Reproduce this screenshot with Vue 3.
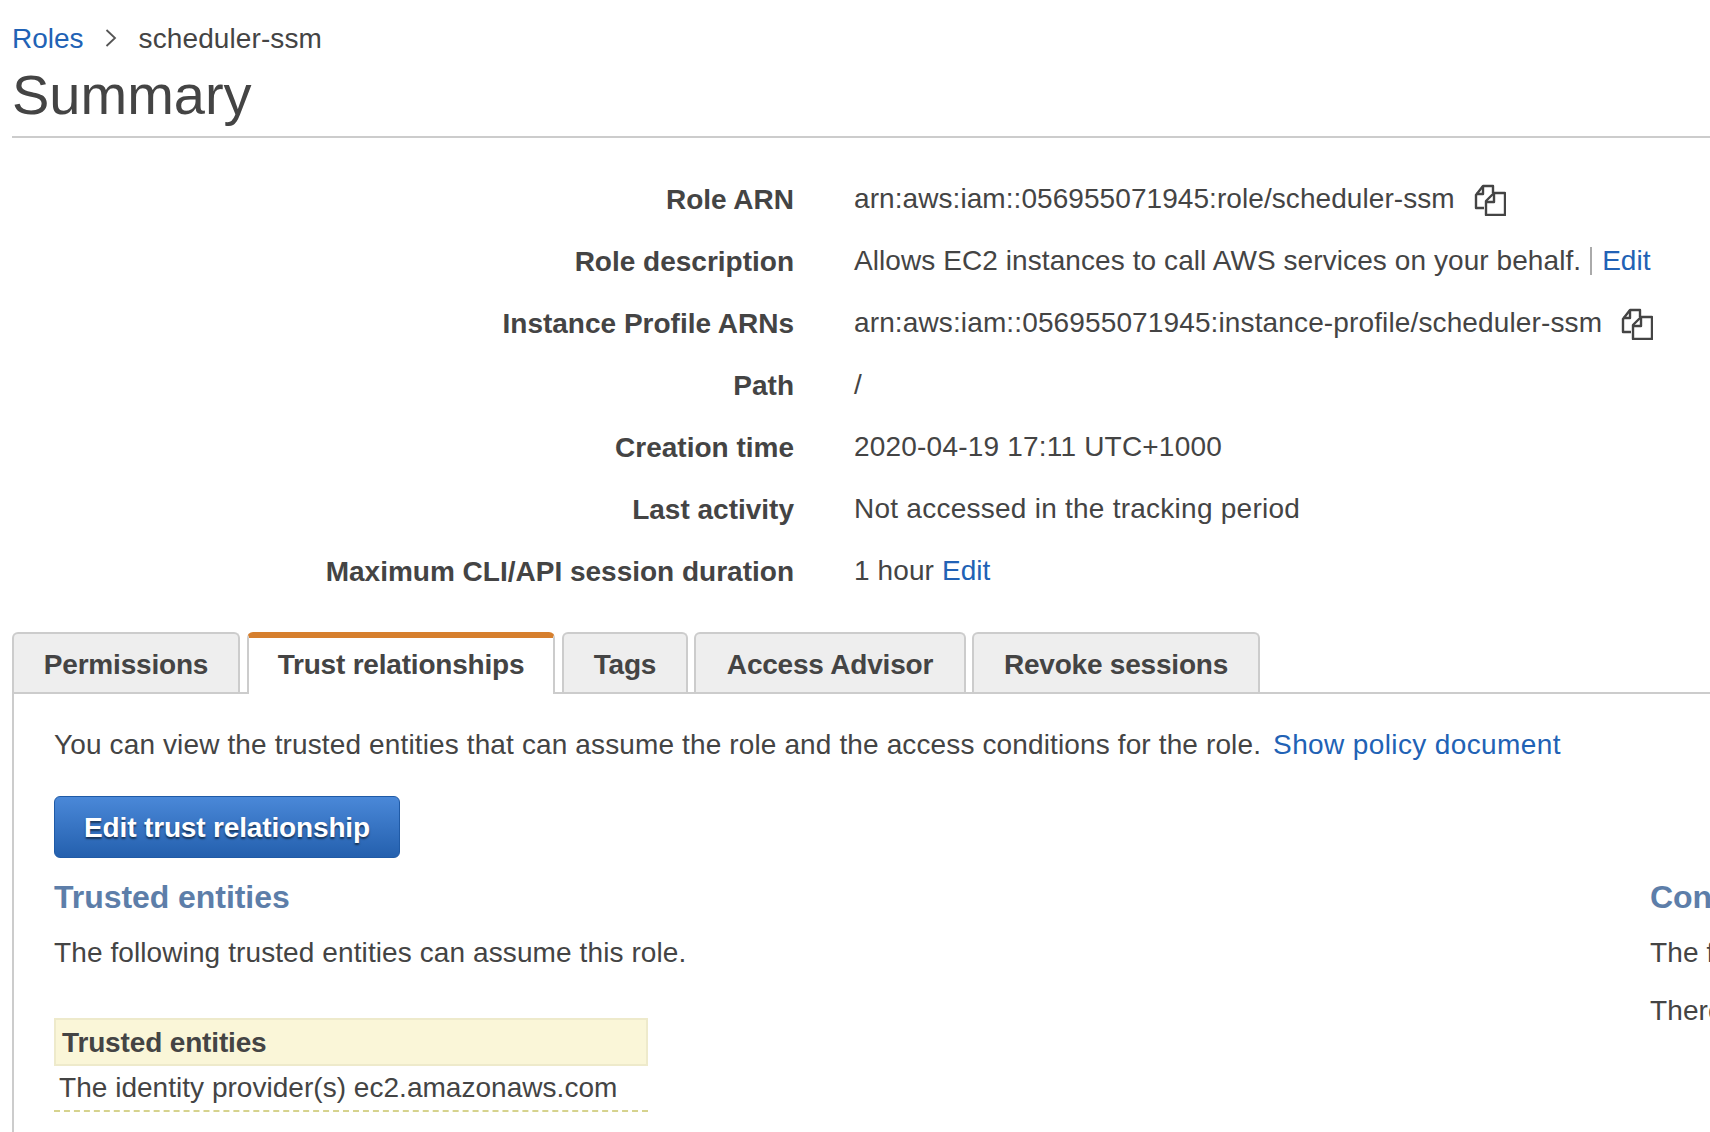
<script setup>
const rows = [
  { label: 'Role ARN', value: 'arn:aws:iam::056955071945:role/scheduler-ssm', copy: true, ls: 0.07 },
  { label: 'Role description', value: 'Allows EC2 instances to call AWS services on your behalf.', sep: true, edit: true, ls: 0.08 },
  { label: 'Instance Profile ARNs', value: 'arn:aws:iam::056955071945:instance-profile/scheduler-ssm', copy: true, ls: 0.13 },
  { label: 'Path', value: '/', ls: 0 },
  { label: 'Creation time', value: '2020-04-19 17:11 UTC+1000', ls: 0.2 },
  { label: 'Last activity', value: 'Not accessed in the tracking period', ls: 0.25 },
  { label: 'Maximum CLI/API session duration', value: '1 hour', edit: true, ls: 0.1 },
]
const tabs = ['Permissions', 'Trust relationships', 'Tags', 'Access Advisor', 'Revoke sessions']
</script>

<template>
  <div class="page">
    <nav class="crumbs">
      <a class="link">Roles</a>
      <svg class="chev" viewBox="0 0 12 18" width="12" height="18"><path d="M1.5 1l8.5 8-8.5 8" fill="none" stroke="#555" stroke-width="1.8" /></svg>
      <span class="current">scheduler-ssm</span>
    </nav>
    <h1>Summary</h1>

    <section class="details">
      <div v-for="r in rows" :key="r.label" class="row">
        <div class="label">{{ r.label }}</div>
        <div class="value">
          <span :style="{ letterSpacing: r.ls + 'px' }">{{ r.value }}</span>
          <span v-if="r.sep" class="sep"></span>
          <a v-if="r.edit" class="link" :class="{ spaced: !r.sep }">Edit</a>
          <svg v-if="r.copy" class="copy" viewBox="0 0 32 32" width="32" height="32" fill="none" stroke="#444" stroke-width="2.4" stroke-linejoin="round">
            <path d="M10 24H2V11L9 2h10v7" />
            <path d="M9 2v8H2" />
            <path d="M12 31V17l8-8h11v22z" />
            <path d="M20 9v9h-8" />
          </svg>
        </div>
      </div>
    </section>

    <div class="tabs">
      <div v-for="(t, i) in tabs" :key="t" class="tab" :class="['tab' + i, { active: i === 1 }]">{{ t }}</div>
    </div>

    <section class="panel">
      <p class="intro">You can view the trusted entities that can assume the role and the access conditions for the role.<a class="link show">Show policy document</a></p>
      <button class="btn">Edit trust relationship</button>
      <div class="cols">
        <div class="col-left">
          <h2>Trusted entities</h2>
          <p class="sub">The following trusted entities can assume this role.</p>
          <div class="tbl">
            <div class="th">Trusted entities</div>
            <div class="td">The identity provider(s) ec2.amazonaws.com</div>
          </div>
        </div>
        <div class="col-right">
          <h2>Conditions</h2>
          <p class="sub">The following conditions define how and when trusted entities can assume the role.</p>
          <p class="sub second">There are no conditions associated with this role.</p>
        </div>
      </div>
    </section>
  </div>
</template>

<style>
html, body { margin: 0; background: #fff; overflow: hidden; }
</style>

<style scoped>
.page {
  width: 1710px;
  height: 1132px;
  overflow: hidden;
  box-sizing: border-box;
  padding-left: 12px;
  font-family: "Liberation Sans", Arial, sans-serif;
  font-size: 28px;
  color: #444;
  background: #fff;
}
.link { color: #2162b5; }
.crumbs {
  display: flex;
  align-items: center;
  height: 32px;
  padding-top: 23px;
  line-height: 32px;
}
.chev { margin: -2px 22px 0 21px; }
.current { letter-spacing: 0.1px; }
h1 {
  margin: 8px 0 0;
  height: 73px;
  line-height: 64px;
  font-size: 56px;
  font-weight: 400;
  border-bottom: 2px solid #ccc;
}
.details { margin-top: 31px; }
.row {
  display: grid;
  grid-template-columns: 782px 1fr;
  column-gap: 60px;
  height: 62px;
  align-items: center;
}
.label { text-align: right; font-weight: 700; }
.value {
  display: flex;
  align-items: center;
  white-space: nowrap;
  margin-top: -3px;
}
.copy { margin-left: 19px; margin-top: 3px; flex: none; }
.sep {
  width: 2px;
  height: 28px;
  background: #aaa;
  margin: 0 10px 0 9px;
}
.spaced { margin-left: 8px; }
.tabs {
  display: flex;
  margin-top: 29px;
  height: 60px;
  align-items: flex-end;
  border-bottom: 2px solid #ccc;
}
.tab {
  box-sizing: border-box;
  height: 60px;
  padding-top: 3px;
  display: flex;
  align-items: center;
  justify-content: center;
  font-weight: 700;
  letter-spacing: -0.2px;
  background: #eee;
  border: 2px solid #ccc;
  border-bottom: 0;
  border-radius: 6px 6px 0 0;
  white-space: nowrap;
}
.tab0 { width: 228px; margin-right: 7px; }
.tab1 { width: 308px; margin-right: 7px; }
.tab2 { width: 126px; margin-right: 6px; }
.tab3 { width: 272px; margin-right: 6px; }
.tab4 { width: 288px; }
.tab.active {
  background: #fff;
  border-top: 6px solid #d67f2e;
  height: 62px;
  margin-bottom: -2px;
  padding-top: 0;
  padding-bottom: 2px;
}
.panel {
  border-left: 2px solid #ccc;
  padding-left: 40px;
  height: 440px;
}
.intro {
  margin: 0;
  padding-top: 31px;
  line-height: 40px;
  white-space: nowrap;
  letter-spacing: 0.13px;
}
.show { margin-left: 12px; letter-spacing: 0.38px; }
.btn {
  display: block;
  margin-top: 31px;
  width: 346px;
  height: 62px;
  padding: 2px 0 0;
  border: 1px solid #1f5aa6;
  border-radius: 6px;
  background: linear-gradient(#4a88d8, #2460ae);
  color: #fff;
  font-family: inherit;
  font-size: 28px;
  font-weight: 700;
  letter-spacing: -0.15px;
  text-shadow: 0 2px 2px rgba(0, 0, 0, 0.55);
}
.cols { display: flex; margin-top: 19px; white-space: nowrap; }
.col-left { width: 1596px; flex: none; }
.col-right { flex: none; }
h2 {
  margin: 0;
  font-size: 32px;
  line-height: 40px;
  font-weight: 700;
  letter-spacing: -0.05px;
  color: #5d7ea9;
}
.sub { margin: 16px 0 0; line-height: 40px; letter-spacing: 0.1px; }
.second { margin-top: 18px; }
.tbl { width: 594px; margin-top: 45px; }
.th {
  box-sizing: border-box;
  height: 48px;
  line-height: 46px;
  padding-left: 6px;
  font-weight: 700;
  letter-spacing: -0.15px;
  background: #faf6d8;
  border: 2px solid #eeeacb;
}
.td {
  height: 44px;
  line-height: 44px;
  padding-left: 5px;
  letter-spacing: 0.03px;
  border-bottom: 2px dashed #d6d38e;
}
</style>
